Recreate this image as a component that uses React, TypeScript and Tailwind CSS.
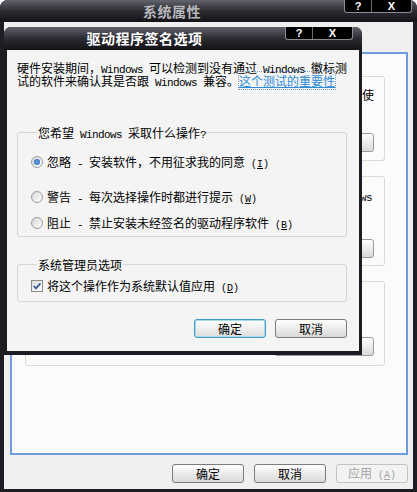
import React from "react";

// Latin runs in the dialog text: narrow mono, like the SimSun latin glyphs
const L: React.FC<{ children: React.ReactNode }> = ({ children }) => (
  <span className="whitespace-pre font-['Liberation_Mono',monospace] text-[11px] leading-none tracking-[-0.6px]">{children}</span>
);

// Access key suffix, e.g. (I) with the letter underlined — kept as flat siblings
const Key: React.FC<{ k: string }> = ({ k }) => (
  <>
    <span className="whitespace-pre font-['Liberation_Mono',monospace] text-[10px] leading-none">{" ("}</span>
    <span className="font-['Liberation_Mono',monospace] text-[10px] leading-none underline">{k}</span>
    <span className="font-['Liberation_Mono',monospace] text-[10px] leading-none">)</span>
  </>
);

interface TitleBarProps {
  title: string;
  active?: boolean;
}

// Dark title bar with the "?" and "X" caption buttons hanging from the top edge
const TitleBar: React.FC<TitleBarProps> = ({ title, active }) => (
  <div className="flex h-full items-center bg-linear-to-b from-[#63636c] via-[#2b2b32] to-[#131317]">
    <div
      className={
        active
          ? "flex-1 text-center text-[14px] font-bold text-white tracking-[0.5px]"
          : "flex-1 text-center text-[14px] font-bold text-[#b9b9bd] tracking-[0.5px]"
      }
    >
      {title}
    </div>
    <div className="self-start flex h-[13px] rounded-b-[3px] border border-t-0 border-[#8b8b92] bg-black text-white text-[11px] font-bold leading-[12px] font-['Liberation_Sans',sans-serif]">
      <span className="w-[26px] text-center">?</span>
      <span className="w-[40px] text-center border-l border-[#6a6a70]">X</span>
    </div>
  </div>
);

interface BtnProps {
  children: React.ReactNode;
  primary?: boolean;
  disabled?: boolean;
}

const XpButton: React.FC<BtnProps> = ({ children, primary, disabled }) => (
  <button
    className={
      primary
        ? "h-[19px] w-[72px] rounded-[3px] border border-[#3e9ac4] bg-linear-to-b from-white to-[#dedede] text-[12px] leading-none text-black shadow-[inset_0_0_0_1px_#a9dbef]"
        : disabled
          ? "h-[19px] w-[72px] rounded-[3px] border border-[#c2c2c2] bg-[#f3f3f3] text-[12px] leading-none text-[#a3a3a3]"
          : "h-[19px] w-[72px] rounded-[3px] border border-[#7c7c7c] bg-linear-to-b from-white to-[#d9d9d9] text-[12px] leading-none text-black"
    }
  >
    {children}
  </button>
);

const Radio: React.FC<{ checked?: boolean }> = ({ checked }) => (
  <span className="flex h-[12px] w-[12px] shrink-0 items-center justify-center rounded-full border border-[#9d9d9d] bg-linear-to-br from-[#d6d6d6] to-white">
    {checked && <span className="h-[6px] w-[6px] rounded-full bg-radial from-[#6fa4e6] to-[#1f5cb8]" />}
  </span>
);

const Checkbox: React.FC = () => (
  <span className="flex h-[12px] w-[12px] shrink-0 items-center justify-center border border-[#8a8a8a] bg-linear-to-br from-[#dcdcdc] to-white">
    <svg width="10" height="10" viewBox="0 0 10 10" aria-hidden="true">
      <path d="M1.8 5 L4 7.3 L8.4 2.3" fill="none" stroke="#3b5d8f" strokeWidth="1.8" />
    </svg>
  </span>
);

const Option: React.FC<{ checked?: boolean; children: React.ReactNode; className: string }> = ({
  checked,
  children,
  className,
}) => (
  <div className={className}>
    <Radio checked={checked} />
    <span className="whitespace-nowrap">{children}</span>
  </div>
);

export default function App() {
  return (
    <div className="relative h-[492px] w-[417px] overflow-hidden font-['Noto_Sans_CJK_SC','Liberation_Sans',sans-serif] text-[12px] leading-[13px] text-black">
      {/* Background window: 系统属性 */}
      <div className="flex h-full w-full flex-col rounded-t-[8px] bg-[#1d1d24]">
        <div className="h-[22px] shrink-0 overflow-hidden rounded-t-[8px] pr-[5px] bg-linear-to-b from-[#63636c] via-[#2b2b32] to-[#131317]">
          <TitleBar title="系统属性" />
        </div>
        <div className="mx-[4px] mb-[3px] flex flex-1 flex-col bg-[#efefef] pl-[6px] pr-[5px] pt-[30px]">
          <div className="flex h-[403px] flex-col gap-[15px] border-2 border-[#6e9ddf] bg-[#fbfbfb] pl-[13px] pr-[21px] pt-[22px]">
            <div className="flex h-[85px] flex-col items-end rounded-[3px] border border-[#dadad2] pr-[10px] pt-[11px]">
              <div className="whitespace-nowrap">设备管理器列出所有安装在计算机上的硬件设备。请使</div>
              <div className="mt-[32px] h-[19px] w-[100px] rounded-[3px] border border-[#9a9a9a] bg-linear-to-b from-white to-[#d9d9d9]" />
            </div>
            <div className="flex h-[90px] flex-col items-end rounded-[3px] border border-[#dadad2] pr-[12px] pt-[12px]">
              <div className="whitespace-nowrap">
                <L>Windows</L>
              </div>
              <div className="mt-[35px] mr-[-2px] h-[19px] w-[100px] rounded-[3px] border border-[#9a9a9a] bg-linear-to-b from-white to-[#d9d9d9]" />
            </div>
            <div className="flex h-[85px] flex-col items-end rounded-[3px] border border-[#dadad2] pr-[10px] pt-[55px]">
              <div className="h-[19px] w-[100px] rounded-[3px] border border-[#9a9a9a] bg-linear-to-b from-white to-[#d9d9d9]" />
            </div>
          </div>
          <div className="mt-[9px] flex justify-end gap-[10px]">
            <XpButton>确定</XpButton>
            <XpButton>取消</XpButton>
            <XpButton disabled>
              应用<Key k="A" />
            </XpButton>
          </div>
        </div>
      </div>

      {/* Foreground window: 驱动程序签名选项 */}
      <div className="absolute left-[4px] top-[27px] flex h-[328px] w-[358px] flex-col rounded-t-[7px] bg-[#1b1b21]">
        <div className="h-[23px] shrink-0 overflow-hidden rounded-t-[7px] pr-[9px] bg-linear-to-b from-[#63636c] via-[#2b2b32] to-[#131317]">
          <TitleBar title="驱动程序签名选项" active />
        </div>
        <div className="mx-[3px] mb-[4px] flex flex-1 flex-col bg-[#f4f4f4] pl-[10px] pr-[12px] pt-[11px]">
          <div className="whitespace-nowrap">
            <div className="h-[13px]">
              硬件安装期间，<L>Windows </L>可以检测到没有通过<L> Windows </L>徽标测
            </div>
            <div className="h-[13px]">
              试的软件来确认其是否跟<L> Windows </L>兼容。
              <a href="#" className="text-[#2d8bd6] underline outline-1 outline-dotted outline-[#7a9cc0]">
                这个测试的重要性
              </a>
            </div>
          </div>

          <fieldset className="mt-[39px] rounded-[3px] border border-[#d8d8d0] pb-[5px] pl-[13px]">
            <legend className="ml-[6px] h-[13px] px-[1px]">
              您希望<L> Windows </L>采取什么操作<L>?</L>
            </legend>
            <Option checked className="mt-[15px] flex h-[16px] items-center gap-[4px]">
              忽略<L> - </L>安装软件，不用征求我的同意<Key k="I" />
            </Option>
            <Option className="mt-[19px] flex h-[16px] items-center gap-[4px]">
              警告<L> - </L>每次选择操作时都进行提示<Key k="W" />
            </Option>
            <Option className="mt-[10px] flex h-[16px] items-center gap-[4px]">
              阻止<L> - </L>禁止安装未经签名的驱动程序软件<Key k="B" />
            </Option>
          </fieldset>

          <fieldset className="mt-[21px] rounded-[3px] border border-[#d8d8d0] pb-[7px] pl-[13px]">
            <legend className="ml-[6px] h-[13px] px-[1px]">系统管理员选项</legend>
            <div className="mt-[7px] flex h-[16px] items-center gap-[4px]">
              <Checkbox />
              <span className="whitespace-nowrap">
                将这个操作作为系统默认值应用<Key k="D" />
              </span>
            </div>
          </fieldset>

          <div className="mt-[17px] flex justify-end gap-[9px]">
            <XpButton primary>确定</XpButton>
            <XpButton>取消</XpButton>
          </div>
        </div>
      </div>
    </div>
  );
}
